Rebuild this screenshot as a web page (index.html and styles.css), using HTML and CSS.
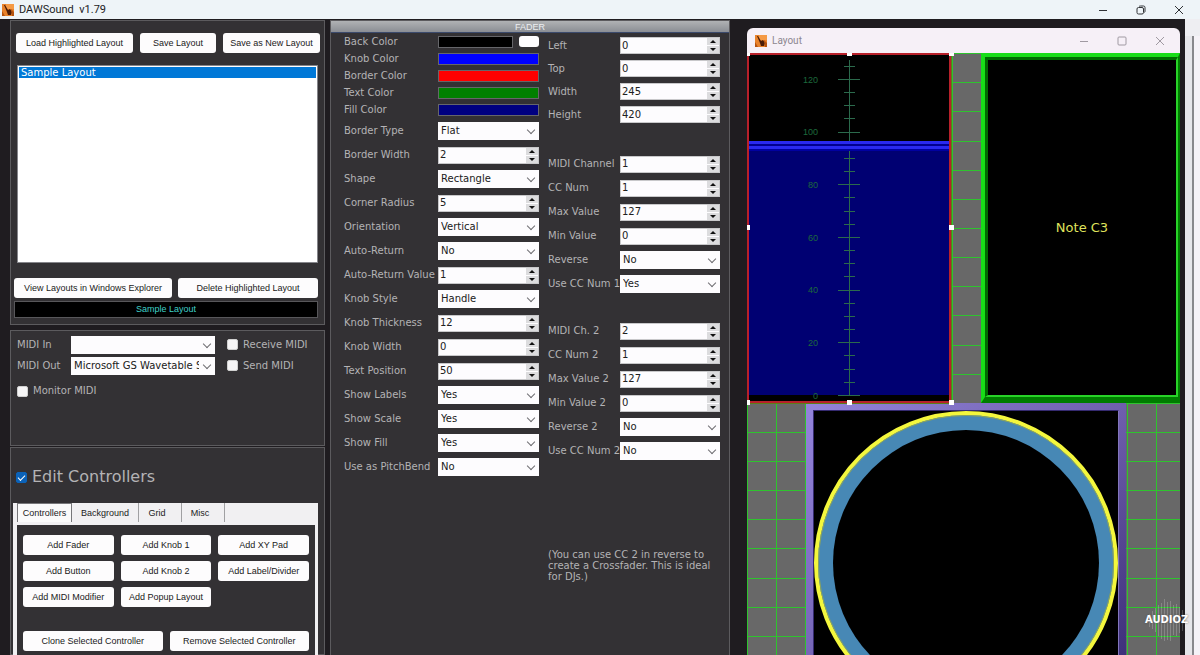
FILE: index.html
```
<!DOCTYPE html>
<html lang="en">
<head>
<meta charset="utf-8">
<title>DAWSound v1.79</title>
<link rel="stylesheet" href="styles.css">
</head>
<body>
<svg width="0" height="0" class="defs" aria-hidden="true">
  <symbol id="logo" viewBox="0 0 12 12">
    <rect width="12" height="12" fill="#e8822c"/>
    <rect x="4" width="8" height="5" fill="#f59a45"/>
    <path d="M2 1h1l3 5 2-1 2 3-1 3H6L5 8z" fill="#4a1c08"/>
    <path d="M0 7l3 5H0zM9 5l3 3v4h-2z" fill="#b4520f"/>
  </symbol>
</svg>
<header class="titlebar">
  <svg class="logo"><use href="#logo"/></svg>
  <h1 class="app-name">DAWSound&nbsp; v1.79</h1>
  <div class="window-buttons">
    <button type="button" aria-label="Minimize"><svg viewBox="0 0 10 10"><path d="M1 5.5h8"/></svg></button>
    <button type="button" aria-label="Restore"><svg viewBox="0 0 10 10"><rect x="1" y="2.5" width="6.5" height="6.5" rx="1.5"/><path d="M3 1.5Q3.500 1 4.500 1H7.500Q9 1 9 2.500V6Q9 7 8.500 7.500"/></svg></button>
    <button type="button" aria-label="Close"><svg viewBox="0 0 10 10"><path d="M1 1l8 8M9 1l-8 8"/></svg></button>
  </div>
</header>
<main class="workspace">
  <div class="sidebar">
    <section class="panel layouts">
      <div class="row top-buttons">
        <button class="btn wide" type="button">Load Highlighted Layout</button>
        <button class="btn" type="button">Save Layout</button>
        <button class="btn medium" type="button">Save as New Layout</button>
      </div>
      <ul class="layout-list" role="listbox" aria-label="Layouts">
        <li role="option" aria-selected="true">Sample Layout</li>
      </ul>
      <div class="row file-buttons">
        <button class="btn wide" type="button">View Layouts in Windows Explorer</button>
        <button class="btn" type="button">Delete Highlighted Layout</button>
      </div>
      <p class="current">Sample Layout</p>
    </section>
    <section class="panel midi">
      <label for="midi-in">MIDI In</label>
      <span class="pick"><select id="midi-in"><option></option></select></span>
      <label class="check"><input type="checkbox">Receive MIDI</label>
      <label for="midi-out">MIDI Out</label>
      <span class="pick"><select id="midi-out"><option>Microsoft GS Wavetable Synth</option></select></span>
      <label class="check"><input type="checkbox">Send MIDI</label>
      <label class="check monitor"><input type="checkbox">Monitor MIDI</label>
    </section>
    <section class="panel editor">
      <label class="check edit"><input type="checkbox" checked>Edit Controllers</label>
      <div class="tabbox">
        <div class="tabs" role="tablist">
          <button class="tab active" type="button" role="tab" aria-selected="true">Controllers</button>
          <button class="tab background" type="button" role="tab">Background</button>
          <button class="tab" type="button" role="tab">Grid</button>
          <button class="tab" type="button" role="tab">Misc</button>
        </div>
        <div class="tab-page">
          <div class="add-grid">
            <button class="btn" type="button">Add Fader</button>
            <button class="btn" type="button">Add Knob 1</button>
            <button class="btn" type="button">Add XY Pad</button>
            <button class="btn" type="button">Add Button</button>
            <button class="btn" type="button">Add Knob 2</button>
            <button class="btn" type="button">Add Label/Divider</button>
            <button class="btn" type="button">Add MIDI Modifier</button>
            <button class="btn" type="button">Add Popup Layout</button>
          </div>
          <div class="selected-grid">
            <button class="btn" type="button">Clone Selected Controller</button>
            <button class="btn" type="button">Remove Selected Controller</button>
          </div>
        </div>
      </div>
    </section>
  </div>

  <section class="properties">
    <h2 class="properties-title">FADER</h2>
    <div class="columns">
      <div class="column">
        <div class="fields colors">
          <span>Back Color</span><span class="swatches"><button type="button" class="swatch black" aria-label="Back Color"></button><button type="button" class="clear" aria-label="Transparent"></button></span>
          <span>Knob Color</span><button type="button" class="swatch blue" aria-label="Knob Color"></button>
          <span>Border Color</span><button type="button" class="swatch red" aria-label="Border Color"></button>
          <span>Text Color</span><button type="button" class="swatch green" aria-label="Text Color"></button>
          <span>Fill Color</span><button type="button" class="swatch navy" aria-label="Fill Color"></button>
        </div>
        <div class="fields">
          <label for="a1">Border Type</label><span class="pick"><select id="a1"><option>Flat</option></select></span>
          <label for="a2">Border Width</label><span class="spin"><input id="a2" value="2"><span class="arrows"><button type="button" aria-label="Up"></button><button type="button" aria-label="Down"></button></span></span>
          <label for="a3">Shape</label><span class="pick"><select id="a3"><option>Rectangle</option></select></span>
          <label for="a4">Corner Radius</label><span class="spin"><input id="a4" value="5"><span class="arrows"><button type="button" aria-label="Up"></button><button type="button" aria-label="Down"></button></span></span>
          <label for="a5">Orientation</label><span class="pick"><select id="a5"><option>Vertical</option></select></span>
          <label for="a6">Auto-Return</label><span class="pick"><select id="a6"><option>No</option></select></span>
          <label for="a7">Auto-Return Value</label><span class="spin"><input id="a7" value="1"><span class="arrows"><button type="button" aria-label="Up"></button><button type="button" aria-label="Down"></button></span></span>
          <label for="a8">Knob Style</label><span class="pick"><select id="a8"><option>Handle</option></select></span>
          <label for="a9">Knob Thickness</label><span class="spin"><input id="a9" value="12"><span class="arrows"><button type="button" aria-label="Up"></button><button type="button" aria-label="Down"></button></span></span>
          <label for="a10">Knob Width</label><span class="spin"><input id="a10" value="0"><span class="arrows"><button type="button" aria-label="Up"></button><button type="button" aria-label="Down"></button></span></span>
          <label for="a11">Text Position</label><span class="spin"><input id="a11" value="50"><span class="arrows"><button type="button" aria-label="Up"></button><button type="button" aria-label="Down"></button></span></span>
          <label for="a12">Show Labels</label><span class="pick"><select id="a12"><option>Yes</option></select></span>
          <label for="a13">Show Scale</label><span class="pick"><select id="a13"><option>Yes</option></select></span>
          <label for="a14">Show Fill</label><span class="pick"><select id="a14"><option>Yes</option></select></span>
          <label for="a15">Use as PitchBend</label><span class="pick"><select id="a15"><option>No</option></select></span>
        </div>
      </div>
      <div class="column right">
        <div class="fields bounds">
          <label for="b1">Left</label><span class="spin"><input id="b1" value="0"><span class="arrows"><button type="button" aria-label="Up"></button><button type="button" aria-label="Down"></button></span></span>
          <label for="b2">Top</label><span class="spin"><input id="b2" value="0"><span class="arrows"><button type="button" aria-label="Up"></button><button type="button" aria-label="Down"></button></span></span>
          <label for="b3">Width</label><span class="spin"><input id="b3" value="245"><span class="arrows"><button type="button" aria-label="Up"></button><button type="button" aria-label="Down"></button></span></span>
          <label for="b4">Height</label><span class="spin"><input id="b4" value="420"><span class="arrows"><button type="button" aria-label="Up"></button><button type="button" aria-label="Down"></button></span></span>
        </div>
        <div class="fields">
          <label for="c1">MIDI Channel</label><span class="spin"><input id="c1" value="1"><span class="arrows"><button type="button" aria-label="Up"></button><button type="button" aria-label="Down"></button></span></span>
          <label for="c2">CC Num</label><span class="spin"><input id="c2" value="1"><span class="arrows"><button type="button" aria-label="Up"></button><button type="button" aria-label="Down"></button></span></span>
          <label for="c3">Max Value</label><span class="spin"><input id="c3" value="127"><span class="arrows"><button type="button" aria-label="Up"></button><button type="button" aria-label="Down"></button></span></span>
          <label for="c4">Min Value</label><span class="spin"><input id="c4" value="0"><span class="arrows"><button type="button" aria-label="Up"></button><button type="button" aria-label="Down"></button></span></span>
          <label for="c5">Reverse</label><span class="pick"><select id="c5"><option>No</option></select></span>
          <label for="c6">Use CC Num 1</label><span class="pick"><select id="c6"><option>Yes</option></select></span>
        </div>
        <div class="fields">
          <label for="d1">MIDI Ch. 2</label><span class="spin"><input id="d1" value="2"><span class="arrows"><button type="button" aria-label="Up"></button><button type="button" aria-label="Down"></button></span></span>
          <label for="d2">CC Num 2</label><span class="spin"><input id="d2" value="1"><span class="arrows"><button type="button" aria-label="Up"></button><button type="button" aria-label="Down"></button></span></span>
          <label for="d3">Max Value 2</label><span class="spin"><input id="d3" value="127"><span class="arrows"><button type="button" aria-label="Up"></button><button type="button" aria-label="Down"></button></span></span>
          <label for="d4">Min Value 2</label><span class="spin"><input id="d4" value="0"><span class="arrows"><button type="button" aria-label="Up"></button><button type="button" aria-label="Down"></button></span></span>
          <label for="d5">Reverse 2</label><span class="pick"><select id="d5"><option>No</option></select></span>
          <label for="d6">Use CC Num 2</label><span class="pick"><select id="d6"><option>No</option></select></span>
        </div>
        <p class="hint">(You can use CC 2 in reverse to create a Crossfader. This is ideal for DJs.)</p>
      </div>
    </div>
  </section>

  <section class="layout-window">
    <header class="layout-title">
      <svg class="logo"><use href="#logo"/></svg>
      <h2 class="layout-name">Layout</h2>
      <div class="window-buttons small">
        <button type="button" aria-label="Minimize"><svg viewBox="0 0 10 10"><path d="M1 5.5h8"/></svg></button>
        <button type="button" aria-label="Maximize"><svg viewBox="0 0 10 10"><rect x="1" y="1" width="8" height="8" rx="1"/></svg></button>
        <button type="button" aria-label="Close"><svg viewBox="0 0 10 10"><path d="M1 1l8 8M9 1l-8 8"/></svg></button>
      </div>
    </header>
    <div class="canvas">
      <svg class="grid-lines" width="1200" height="900">
        <path d="M0 .5H1200M0 29.500H1200M0 58.500H1200M0 88.500H1200M0 117.500H1200M0 146.500H1200M0 175.500H1200M0 204.500H1200M0 233.500H1200M0 262.500H1200M0 292.500H1200M0 321.500H1200M0 350.500H1200M0 379.500H1200M0 408.500H1200M0 437.500H1200M0 466.500H1200M0 495.500H1200M0 525.500H1200M0 554.500H1200M0 583.500H1200M.5 0V900M29.500 0V900M58.500 0V900M205.500 0V900M380.500 0V900M409.500 0V900"/>
      </svg>
      <div class="note"><div class="note-face">Note C3</div></div>
      <div class="knob">
        <div class="knob-face">
          <svg viewBox="0 0 304 304" width="304" height="304">
            <circle cx="152" cy="152" r="150" fill="#4788b5" stroke="#f4f73d" stroke-width="4"/>
            <circle cx="152" cy="152" r="147.500" fill="none" stroke="#8ba35c" stroke-width="1"/>
            <circle cx="152" cy="152" r="133" fill="#000"/>
          </svg>
        </div>
      </div>
      <div class="fader">
        <svg width="205" height="351" viewBox="0 0 205 351">
          <rect width="205" height="351" fill="#000"/>
          <rect x="2" y="97" width="200" height="245" fill="#000072"/>
          <path class="scale" d="M102.500 7V343M91 26.500h22M91 79.500h22M91 131.500h22M91 184.500h22M91 237.500h22M91 289.500h22M91 342.500h22"/>
          <path class="scale" d="M97 13.500h11M97 39.500h11M97 52.500h11M97 65.500h11M97 105.500h11M97 118.500h11M97 144.500h11M97 158.500h11M97 171.500h11M97 197.500h11M97 210.500h11M97 223.500h11M97 250.500h11M97 263.500h11M97 276.500h11M97 302.500h11M97 316.500h11M97 329.500h11"/>
          <rect x="2" y="88" width="200" height="10" fill="#0000a0"/>
          <path d="M2 89.500H202M2 94.500H202" stroke="#2929f0" stroke-width="3"/>
          <path d="M2 92H202" stroke="#000090" stroke-width="2"/>
          <g class="scale-text">
            <text x="71" y="30">120</text><text x="71" y="82">100</text><text x="71" y="135">80</text><text x="71" y="188">60</text><text x="71" y="240">40</text><text x="71" y="293">20</text><text x="71" y="346">0</text>
          </g>
          <path d="M2 1H204M1 1V349M203 1V349M1 349H204" stroke="#b8202a" stroke-width="2" fill="none"/>
          <path d="M204.500 0V351M0 350.500H205" stroke="#5c7d18"/>
        </svg>
        <i class="handle t l"></i><i class="handle t c"></i><i class="handle t r"></i>
        <i class="handle m l"></i><i class="handle m r"></i>
        <i class="handle b l"></i><i class="handle b c"></i><i class="handle b r"></i>
      </div>
    </div>
  </section>
  <div class="page-edge"></div>
</main>
<div class="watermark">
  <svg width="44" height="48" viewBox="0 0 44 48"><path d="M4.500 18v13M7.500 15v18M10.500 12v24M13.500 9v31M16.500 7v36M19.500 3v42M22.500 6v38M25.500 5v40M28.500 9v30M31.500 8v32M34.500 11v26M37.500 14v21M40.500 17v14" stroke="#fff" opacity=".2"/></svg>
  <span>AUDIOZ</span>
</div>
</body>
</html>
```
FILE: styles.css
```
* { box-sizing: border-box; }
body {
  margin: 0;
  height: 100vh;
  display: flex;
  flex-direction: column;
  overflow: hidden;
  position: relative;
  background: #1f1c20;
  color: #b4b3b5;
  font: 10px/12px "DejaVu Sans", Verdana, sans-serif;
}
h1, h2, p, ul { margin: 0; padding: 0; font-weight: normal; }
button, input, select { font: inherit; margin: 0; padding: 0; border: 0; border-radius: 0; }
.defs { position: absolute; }
.logo { width: 12px; height: 12px; flex: none; }

.titlebar {
  height: 19px;
  flex: none;
  display: flex;
  align-items: center;
  gap: 5px;
  padding: 0 11px 0 2px;
  background: #eef4f8;
}
.app-name { font: 11px/16px Roboto, sans-serif; color: #1c1c1e; }
.window-buttons { margin-left: auto; display: flex; gap: 18px; }
.window-buttons button {
  width: 20px;
  height: 16px;
  display: grid;
  place-items: center;
  background: none;
}
.window-buttons svg { width: 10px; height: 10px; fill: none; stroke: #303236; }
.window-buttons.small svg { stroke: #a09aa2; }

.workspace {
  flex: 1;
  min-height: 0;
  display: flex;
  padding-left: 10px;
}
.sidebar {
  width: 315px;
  flex: none;
  display: flex;
  flex-direction: column;
  padding-top: 1px;
}
.panel { background: #333134; border: 1px solid #5c5b5e; }
.btn {
  height: 20px;
  background: #fdfcfd;
  border-radius: 3px;
  color: #1a1a1a;
  font: 9px/12px "Liberation Sans", Arial, sans-serif;
  white-space: nowrap;
}
.row { display: flex; }
.row .btn { flex: 1; }
.layouts { flex: none; padding: 12px 6px 6px 3px; margin-bottom: 5px; }
.top-buttons { gap: 7px; margin: 0 -2px 12px 2px; }
.row.top-buttons .wide { flex: 0 0 117px; }
.row.top-buttons .medium { flex: 0 0 97px; }
.layout-list {
  height: 198px;
  margin: 0 0 15px 3px;
  padding: 1px;
  background: #fff;
  border: 1px solid #85858a;
  list-style: none;
}
.layout-list li { background: #0078d7; color: #fff; padding: 0 2px; line-height: 11px; }
.file-buttons { gap: 6px; margin-bottom: 3px; }
.row.file-buttons .wide { flex: 0 0 158px; }
.current {
  background: #000;
  border: 1px solid #58575a;
  color: #3fd0c8;
  font: 9px/15px "Liberation Sans", Arial, sans-serif;
  text-align: center;
}

.midi {
  height: 116px;
  flex: none;
  margin-bottom: 1px;
  padding: 3px 6px;
  display: grid;
  grid-template-columns: 54px 144px 1fr;
  grid-template-rows: 21px 21px 30px;
  align-items: center;
  align-content: start;
}
.check { display: flex; align-items: center; gap: 5px; padding-left: 12px; white-space: nowrap; }
.check.monitor { grid-column: 1 / 3; padding-left: 0; }
.check input {
  appearance: none;
  width: 11px;
  height: 11px;
  background: #f6f5f6;
  border: 1px solid #d0d0d0;
  border-radius: 2px;
  display: grid;
  place-items: center;
}
.check input:checked { background: #0b62b8; border-color: #0b62b8; }
.check input:checked::after {
  content: "";
  width: 6px;
  height: 3px;
  border: solid #fff;
  border-width: 0 0 1px 1px;
  transform: rotate(-45deg);
}

.pick, .spin { position: relative; display: flex; height: 18px; min-width: 0; background: #fdfcfe; color: #202020; }
.pick select {
  appearance: none;
  flex: 1;
  min-width: 0;
  padding: 0 16px 0 3px;
  background: none;
  color: inherit;
}
.pick::after {
  content: "";
  position: absolute;
  right: 5px;
  top: 5px;
  width: 5px;
  height: 5px;
  border: solid #6e6e72;
  border-width: 0 1px 1px 0;
  transform: rotate(45deg);
  pointer-events: none;
}
.spin { height: 17px; border: 1px solid #c8c8ca; }
.spin input { flex: 1; width: 0; min-width: 0; padding: 0 1px; background: none; color: inherit; }
.arrows { width: 12px; flex: none; display: flex; flex-direction: column; gap: 1px; }
.arrows button {
  flex: 1;
  display: grid;
  place-items: center;
  background: #dcdcde;
}
.arrows button::before {
  content: "";
  border: solid transparent;
  border-width: 0 3px 3px;
  border-bottom-color: #111;
}
.arrows button:last-child::before { border-width: 3px 3px 0; border-top-color: #111; }

.editor { flex: 1; min-height: 0; display: flex; flex-direction: column; padding: 19px 6px 0 2px; }
.check.edit { padding-left: 3px; font-size: 16px; line-height: 20px; margin-bottom: 16px; }
.tabbox { flex: 1; background: #f1f0f2; padding: 0 3px 0 4px; }
.tabs { display: flex; height: 22px; padding-bottom: 3px; }
.tab {
  width: 43px;
  background: none;
  border-right: 1px solid #a0a0a2;
  color: #222;
  font: 9px/12px "Liberation Sans", Arial, sans-serif;
  padding-right: 6px;
}
.tab.active { width: 55px; padding: 0; border: solid #77777a; border-width: 1px 1px 0; background: #fafafa; }
.tab.background { width: 67px; padding: 0; }
.tab-page { height: 100%; background: #333134; padding: 10px 6px; }
.add-grid { display: grid; grid-template-columns: repeat(3, 1fr); gap: 6px 7px; }
.selected-grid { display: grid; grid-template-columns: 1fr 1fr; gap: 7px; margin-top: 24px; }

.properties {
  width: 400px;
  flex: none;
  margin: 1px 0 0 5px;
  background: #333134;
  border: 1px solid #5c5b5e;
  border-bottom: 0;
}
.properties-title {
  height: 12px;
  background: linear-gradient(#b0b2b4, #8b8e94);
  border-bottom: 1px solid #3b4a6c;
  color: #eceef0;
  font: 9px/12px "Liberation Sans", Arial, sans-serif;
  text-align: center;
}
.columns { display: flex; gap: 9px; padding: 0 9px 0 13px; }
.column { flex: 1; min-width: 0; }
.column.right { flex: 0 0 172px; padding-top: 1px; }
.fields {
  display: grid;
  grid-template-columns: 94px 1fr;
  grid-auto-rows: 24px;
  align-items: center;
  white-space: nowrap;
}
.fields.colors { grid-auto-rows: 17px; margin-bottom: 1px; }
.right .fields { grid-template-columns: 72px 1fr; margin-bottom: 23px; }
.right .fields.bounds { grid-auto-rows: 23px; margin-bottom: 26px; }
.swatches { display: flex; gap: 6px; align-items: center; }
.swatch { height: 12px; flex: 1; border: 1px solid #66666a; }
.black { background: #000; }
.blue { background: #00f; }
.red { background: #f00; }
.green { background: #008000; }
.navy { background: #000080; }
.clear { width: 20px; height: 11px; background: #fdfcfe; border-radius: 3px; }
.hint { padding-top: 63px; line-height: 11px; }

.layout-window {
  flex: 1;
  min-width: 0;
  margin: 9px 5px 0 17px;
  display: flex;
  flex-direction: column;
}
.layout-title {
  height: 25px;
  flex: none;
  display: flex;
  align-items: center;
  gap: 5px;
  padding: 0 10px 0 8px;
  background: #f6f0f7;
  border-radius: 6px 6px 0 0;
}
.layout-name { font: 10px/14px Roboto, sans-serif; color: #8d878f; }
.canvas { flex: 1; position: relative; overflow: hidden; background: #686868; }
.grid-lines { position: absolute; left: 0; top: 0; stroke: #2ec42e; }
.fader { position: absolute; left: 0; top: 0; }
.fader svg { display: block; }
.scale { stroke: #2b6a4c; fill: none; }
.scale-text { font: 9px "Liberation Sans", Arial, sans-serif; fill: #1d6a3c; text-anchor: end; }
.handle { position: absolute; width: 5px; height: 5px; background: #fff; }
.handle.l { left: -2px; }
.handle.c { left: 100px; }
.handle.r { left: 202px; }
.handle.t { top: -2px; }
.handle.m { top: 172px; }
.handle.b { top: 347px; }
.note {
  position: absolute;
  left: 234px;
  top: 0;
  width: 199px;
  height: 350px;
  border: solid;
  border-width: 4px 2px 6px 4px;
  border-color: #18de18 #007c00 #007c00 #18de18;
}
.note-face {
  height: 100%;
  display: grid;
  place-items: center;
  background: #000;
  border: solid;
  border-width: 3px 2px 2px 3px;
  border-color: #006c00 #28d428 #28d428 #006c00;
  color: #dfe25c;
  font-size: 13px;
  line-height: 16px;
}
.knob {
  position: absolute;
  left: 59px;
  top: 350px;
  width: 320px;
  height: 320px;
  padding: 7px;
  background: linear-gradient(135deg, #9484dc, #6f5fae 50%, #30246c);
}
.knob-face { border: 1px solid; border-color: #352a70 #8275bd #8275bd #352a70; background: #000; }
.knob-face svg { display: block; }
.page-edge {
  width: 15px;
  flex: none;
  background: linear-gradient(90deg, #e6e6ea 7px, #88888c 7px, #88888c 9px, #f5f2f7 9px);
  border-top: 17px solid #eeeef2;
}
.watermark { position: absolute; right: 11px; bottom: 11px; width: 44px; height: 48px; }
.watermark span {
  position: absolute;
  left: 0;
  top: 18px;
  color: #fff;
  font-size: 10px;
  font-weight: bold;
  text-shadow: 0 0 2px #555;
}
```
